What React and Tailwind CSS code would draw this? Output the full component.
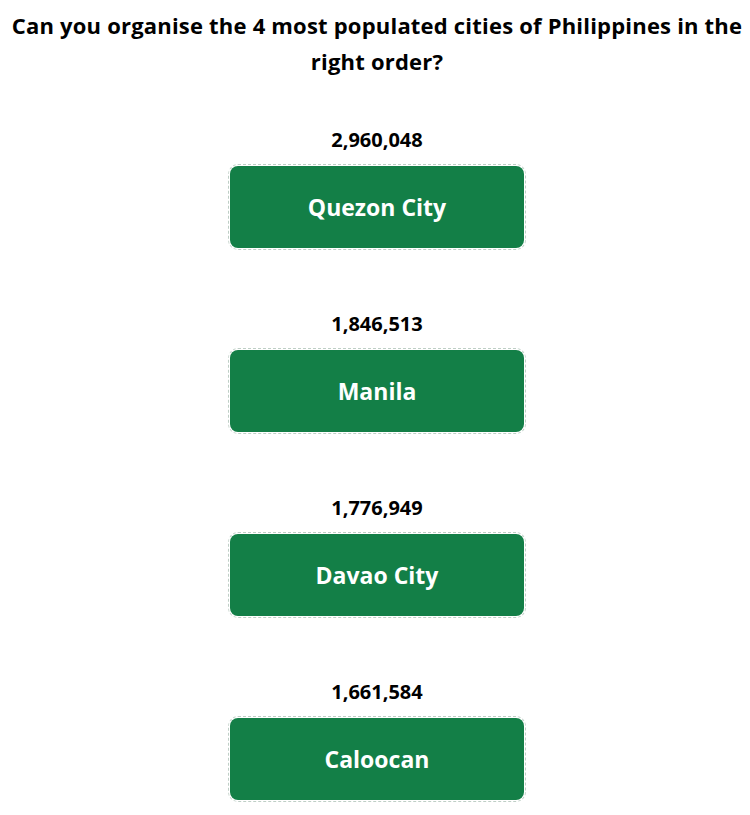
const cities = [
  { name: 'Quezon City', pop: '2,960,048' },
  { name: 'Manila', pop: '1,846,513' },
  { name: 'Davao City', pop: '1,776,949' },
  { name: 'Caloocan', pop: '1,661,584' },
];

const CityCard = ({ name, pop }) => (
  <div className="flex flex-col items-center">
    <div className="text-[20px] leading-[28px] font-bold text-black">{pop}</div>
    <div className="mt-[10px] w-[298px] rounded-[10px] border border-dashed border-[#bfcfc6] p-[1px]">
      <div className="h-[82px] rounded-[8px] bg-[#137f47] flex items-center justify-center">
        <span className="text-[23px] font-bold text-white">{name}</span>
      </div>
    </div>
  </div>
);

export default function App() {
  return (
    <div
      className="min-h-screen bg-white text-black pl-[4px]"
      style={{ fontFamily: '"Open Sans", "Noto Sans", sans-serif' }}
    >
      <h1 className="pt-[7px] text-center text-[22px] leading-[36px] font-bold tracking-[0.2px]">
        Can you organise the 4 most populated cities of Philippines in the right order?
      </h1>
      <div className="mt-[47px] flex flex-col gap-[60px]">
        {cities.map((c) => (
          <CityCard key={c.name} name={c.name} pop={c.pop} />
        ))}
      </div>
    </div>
  );
}
